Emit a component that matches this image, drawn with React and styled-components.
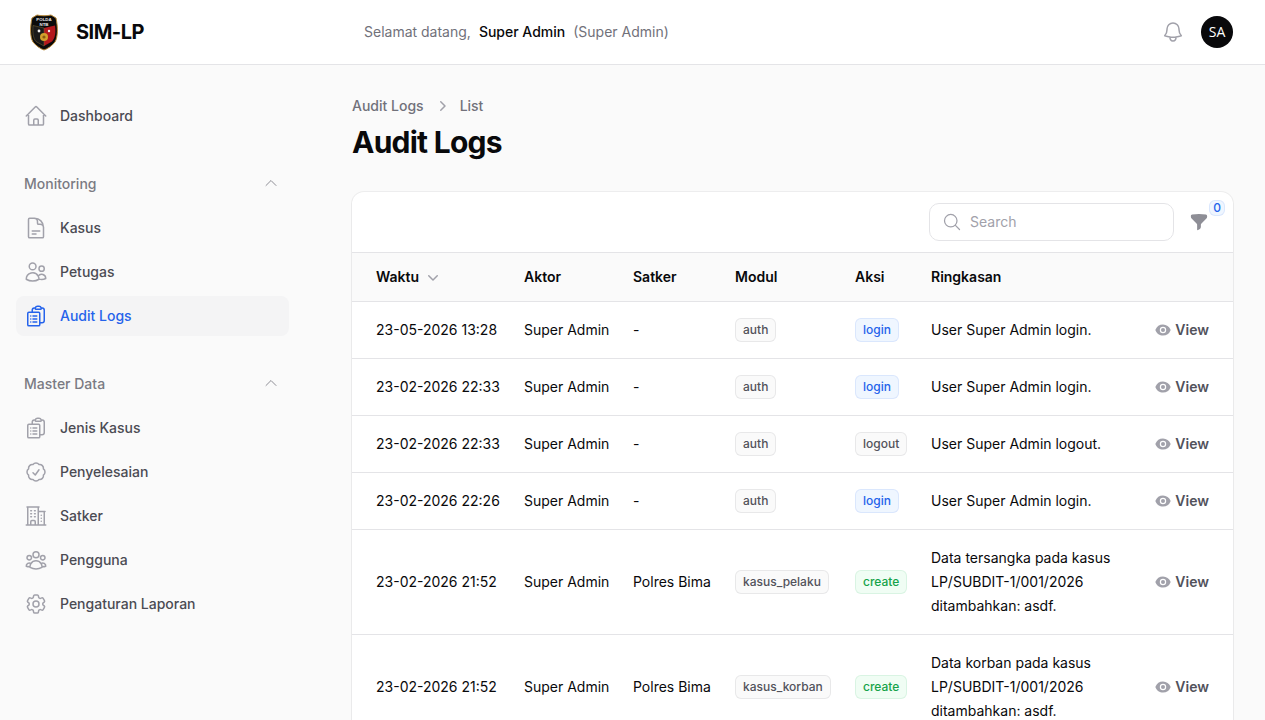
import React from "react"
import styled, { createGlobalStyle } from "styled-components"
import {
  HiOutlineHome,
  HiOutlineDocumentText,
  HiOutlineUsers,
  HiOutlineClipboardDocumentList,
  HiOutlineCheckBadge,
  HiOutlineBuildingOffice2,
  HiOutlineUserGroup,
  HiOutlineCog6Tooth,
  HiOutlineBell,
  HiOutlineMagnifyingGlass,
  HiOutlineChevronUp,
  HiFunnel,
  HiMiniEye,
  HiMiniChevronRight,
  HiMiniChevronDown,
} from "react-icons/hi2"

const GlobalStyle = createGlobalStyle`
  * {
    box-sizing: border-box;
  }
  html, body {
    margin: 0;
    height: 100%;
    overflow: hidden;
  }
  body {
    background: #fafafa;
    color: #09090b;
    font-family: Inter, "Liberation Sans", sans-serif;
    font-size: 14px;
    line-height: 20px;
  }
`

const monitoring = [
  { label: "Kasus", icon: HiOutlineDocumentText },
  { label: "Petugas", icon: HiOutlineUsers },
  { label: "Audit Logs", icon: HiOutlineClipboardDocumentList, active: true },
]

const masterData = [
  { label: "Jenis Kasus", icon: HiOutlineClipboardDocumentList },
  { label: "Penyelesaian", icon: HiOutlineCheckBadge },
  { label: "Satker", icon: HiOutlineBuildingOffice2 },
  { label: "Pengguna", icon: HiOutlineUserGroup },
  { label: "Pengaturan Laporan", icon: HiOutlineCog6Tooth },
]

const logs = [
  { time: "23-05-2026 13:28", satker: "-", modul: "auth", aksi: "login", text: "User Super Admin login." },
  { time: "23-02-2026 22:33", satker: "-", modul: "auth", aksi: "login", text: "User Super Admin login." },
  { time: "23-02-2026 22:33", satker: "-", modul: "auth", aksi: "logout", text: "User Super Admin logout." },
  { time: "23-02-2026 22:26", satker: "-", modul: "auth", aksi: "login", text: "User Super Admin login." },
  {
    time: "23-02-2026 21:52",
    satker: "Polres Bima",
    modul: "kasus_pelaku",
    aksi: "create",
    text: "Data tersangka pada kasus LP/SUBDIT-1/001/2026 ditambahkan: asdf.",
  },
  {
    time: "23-02-2026 21:52",
    satker: "Polres Bima",
    modul: "kasus_korban",
    aksi: "create",
    text: "Data korban pada kasus LP/SUBDIT-1/001/2026 ditambahkan: asdf.",
  },
]

const toneOf = { login: "blue", logout: "gray", create: "green" }

const Logo = () => (
  <LogoMark viewBox="0 0 30 38" aria-hidden="true">
    <path d="M3 5 L8 2 C12 3 18 3 22 2 L27 5 C29 14 29 24 26 29 C23 33 18 36 15 37 C12 36 7 33 4 29 C1 24 1 14 3 5Z" fill="#0b0b0b" stroke="#b98a3a" strokeWidth="1" />
    <path d="M15 15 L26 12.5 C27 20 26 25 23 28.5 L15 33Z" fill="#b3171c" />
    <path d="M15 15 L4 12.5 C3.5 20 4 25 7 28.5 L15 33Z" fill="#1a1a1a" stroke="#7b6a3a" strokeWidth=".5" />
    <circle cx="15" cy="24" r="4" fill="#d3a02c" />
    <circle cx="15" cy="24" r="1.6" fill="#8a5a12" />
    <circle cx="10" cy="18" r="1.4" fill="#f1f1f1" />
    <circle cx="20" cy="18" r="1.2" fill="#f1f1f1" />
    <LogoText x="15" y="8.2">POLDA</LogoText>
    <LogoText x="15" y="12.6">NTB</LogoText>
  </LogoMark>
)

const NavEntry = ({ item }) => {
  const Icon = item.icon
  return (
    <NavItem $active={item.active}>
      <Icon />
      <span>{item.label}</span>
    </NavItem>
  )
}

const NavGroup = ({ title, items }) => (
  <Group>
    <GroupLabel>
      <span>{title}</span>
      <HiOutlineChevronUp />
    </GroupLabel>
    {items.map((item) => (
      <NavEntry key={item.label} item={item} />
    ))}
  </Group>
)

const App = () => {
  return (
    <Page>
      <GlobalStyle />
      <Topbar>
        <Brand>
          <Logo />
          <BrandName>SIM-LP</BrandName>
        </Brand>
        <Welcome>
          Selamat datang,<WelcomeName>Super Admin</WelcomeName>(Super Admin)
        </Welcome>
        <TopActions>
          <BellButton>
            <HiOutlineBell />
          </BellButton>
          <Avatar>SA</Avatar>
        </TopActions>
      </Topbar>
      <Body>
        <Sidebar>
          <NavEntry item={{ label: "Dashboard", icon: HiOutlineHome }} />
          <NavGroup title="Monitoring" items={monitoring} />
          <NavGroup title="Master Data" items={masterData} />
        </Sidebar>
        <Main>
          <Breadcrumbs>
            <span>Audit Logs</span>
            <HiMiniChevronRight />
            <span>List</span>
          </Breadcrumbs>
          <Title>Audit Logs</Title>
          <Card>
            <Toolbar>
              <SearchBox>
                <HiOutlineMagnifyingGlass />
                <SearchInput placeholder="Search" />
              </SearchBox>
              <FilterButton>
                <HiFunnel />
                <FilterCount>0</FilterCount>
              </FilterButton>
            </Toolbar>
            <Table>
              <colgroup>
                <col style={{ width: 160 }} />
                <col style={{ width: 109 }} />
                <col style={{ width: 102 }} />
                <col style={{ width: 120 }} />
                <col style={{ width: 76 }} />
                <col style={{ width: 212 }} />
                <col />
              </colgroup>
              <thead>
                <tr>
                  <Th>
                    <SortLabel>
                      Waktu
                      <HiMiniChevronDown />
                    </SortLabel>
                  </Th>
                  <Th>Aktor</Th>
                  <Th>Satker</Th>
                  <Th>Modul</Th>
                  <Th>Aksi</Th>
                  <Th>Ringkasan</Th>
                  <Th />
                </tr>
              </thead>
              <tbody>
                {logs.map((log, i) => (
                  <tr key={i}>
                    <Td>{log.time}</Td>
                    <Td>Super Admin</Td>
                    <Td>{log.satker}</Td>
                    <Td>
                      <Badge $tone="gray">{log.modul}</Badge>
                    </Td>
                    <Td>
                      <Badge $tone={toneOf[log.aksi]}>{log.aksi}</Badge>
                    </Td>
                    <SummaryTd>{log.text}</SummaryTd>
                    <Td>
                      <ViewLink>
                        <HiMiniEye />
                        View
                      </ViewLink>
                    </Td>
                  </tr>
                ))}
              </tbody>
            </Table>
          </Card>
        </Main>
      </Body>
    </Page>
  )
}

export default App

const tones = {
  gray: { bg: "#fafafa", fg: "#52525b", ring: "rgba(82, 82, 91, 0.1)" },
  blue: { bg: "#eff6ff", fg: "#2563eb", ring: "rgba(37, 99, 235, 0.1)" },
  green: { bg: "#f0fdf4", fg: "#16a34a", ring: "rgba(22, 163, 74, 0.1)" },
}

const Page = styled.div`
  height: 100vh;
  display: flex;
  flex-direction: column;
  overflow: hidden;
`
const Topbar = styled.header`
  flex: none;
  height: 65px;
  display: flex;
  align-items: center;
  background: #fff;
  border-bottom: 1px solid #e4e4e7;
  padding: 0 32px 0 24px;
`
const Brand = styled.div`
  width: 340px;
  display: flex;
  align-items: center;
  gap: 17px;
  padding-left: 5px;
`
const LogoMark = styled.svg`
  width: 30px;
  height: 38px;
  flex: none;
`
const LogoText = styled.text`
  fill: #e8e8e8;
  font-family: "Liberation Sans", sans-serif;
  font-size: 4.4px;
  font-weight: 700;
  text-anchor: middle;
`
const BrandName = styled.div`
  font-size: 20px;
  line-height: 28px;
  font-weight: 700;
  letter-spacing: -0.5px;
`
const Welcome = styled.div`
  flex: 1;
  color: #71717a;
`
const WelcomeName = styled.span`
  color: #09090b;
  font-weight: 500;
  margin: 0 8px;
`
const TopActions = styled.div`
  display: flex;
  align-items: center;
  gap: 16px;
`
const BellButton = styled.div`
  width: 24px;
  height: 24px;
  color: #a1a1aa;
  svg {
    display: block;
    width: 24px;
    height: 24px;
  }
`
const Avatar = styled.div`
  width: 32px;
  height: 32px;
  border-radius: 50%;
  background: #09090b;
  color: #fff;
  display: flex;
  align-items: center;
  justify-content: center;
  font-family: "Open Sans", sans-serif;
  font-size: 14px;
`
const Body = styled.div`
  flex: 1;
  min-height: 0;
  display: flex;
`
const Sidebar = styled.aside`
  flex: none;
  width: 305px;
  padding: 31px 16px 0;
  display: flex;
  flex-direction: column;
  gap: 28px;
`
const Group = styled.div`
  display: flex;
  flex-direction: column;
  gap: 4px;
`
const GroupLabel = styled.div`
  height: 40px;
  padding: 0 8px;
  display: flex;
  align-items: center;
  justify-content: space-between;
  color: #7a7a83;
  font-weight: 500;
  svg {
    width: 20px;
    height: 20px;
    padding: 2px;
    color: #8e8e96;
    transform: translateY(-1px);
  }
`
const NavItem = styled.div`
  height: 40px;
  display: flex;
  align-items: center;
  gap: 12px;
  padding: 0 8px;
  border-radius: 8px;
  font-weight: 500;
  color: ${(p) => (p.$active ? "#2563eb" : "#4b4b53")};
  background: ${(p) => (p.$active ? "#f4f4f5" : "transparent")};
  svg {
    width: 24px;
    height: 24px;
    flex: none;
    color: ${(p) => (p.$active ? "#2563eb" : "#a1a1aa")};
  }
`
const Main = styled.main`
  flex: 1;
  min-width: 0;
  padding: 31px 32px 0 47px;
`
const Breadcrumbs = styled.div`
  display: flex;
  align-items: center;
  gap: 8px;
  color: #71717a;
  font-weight: 500;
  svg {
    width: 20px;
    height: 20px;
    color: #a1a1aa;
  }
`
const Title = styled.h1`
  margin: 8px 0 32px;
  font-size: 30px;
  line-height: 36px;
  font-weight: 700;
  letter-spacing: -0.75px;
`
const Card = styled.section`
  background: #fff;
  border-radius: 12px;
  box-shadow: 0 0 0 1px rgba(9, 9, 11, 0.05), 0 1px 2px rgba(0, 0, 0, 0.05);
  overflow: hidden;
`
const Toolbar = styled.div`
  height: 61px;
  display: flex;
  align-items: center;
  justify-content: flex-end;
  gap: 15px;
  padding: 0 24px;
  border-bottom: 1px solid #e4e4e7;
`
const SearchBox = styled.label`
  width: 245px;
  height: 38px;
  display: flex;
  align-items: center;
  gap: 8px;
  padding: 0 12px;
  border: 1px solid #e4e4e7;
  border-radius: 10px;
  background: #fff;
  svg {
    width: 20px;
    height: 20px;
    flex: none;
    color: #a1a1aa;
  }
`
const SearchInput = styled.input`
  flex: 1;
  min-width: 0;
  border: 0;
  outline: 0;
  padding: 0;
  background: transparent;
  font: inherit;
  color: #09090b;
  &::placeholder {
    color: #a1a1aa;
    opacity: 1;
  }
`
const FilterButton = styled.div`
  position: relative;
  width: 20px;
  height: 20px;
  svg {
    display: block;
    width: 20px;
    height: 20px;
    color: #8e8e96;
  }
`
const FilterCount = styled.span`
  position: absolute;
  top: -12px;
  left: 20px;
  min-width: 16px;
  height: 16px;
  border-radius: 6px;
  background: #eff6ff;
  box-shadow: inset 0 0 0 1px rgba(37, 99, 235, 0.1);
  color: #2563eb;
  font-size: 12px;
  line-height: 16px;
  font-weight: 500;
  text-align: center;
`
const Table = styled.table`
  width: 100%;
  border-collapse: separate;
  border-spacing: 0;
  table-layout: fixed;
  tr > *:first-child {
    padding-left: 24px;
  }
  tr > *:last-child {
    padding-right: 24px;
  }
`
const Th = styled.th`
  height: 49px;
  padding: 0 12px;
  background: #fafafa;
  border-bottom: 1px solid #e4e4e7;
  text-align: left;
  font-weight: 600;
`
const SortLabel = styled.span`
  display: inline-flex;
  align-items: center;
  gap: 4px;
  svg {
    width: 20px;
    height: 20px;
    color: #a1a1aa;
  }
`
const Td = styled.td`
  padding: 16px 12px;
  border-bottom: 1px solid #e4e4e7;
  line-height: 24px;
  white-space: nowrap;
`
const SummaryTd = styled(Td)`
  white-space: normal;
`
const Badge = styled.span`
  display: block;
  width: fit-content;
  height: 24px;
  padding: 4px 8px;
  border-radius: 6px;
  font-size: 12px;
  line-height: 16px;
  font-weight: 500;
  white-space: nowrap;
  background: ${(p) => tones[p.$tone].bg};
  color: ${(p) => tones[p.$tone].fg};
  box-shadow: inset 0 0 0 1px ${(p) => tones[p.$tone].ring};
`
const ViewLink = styled.span`
  display: flex;
  align-items: center;
  justify-content: flex-end;
  gap: 4px;
  color: #52525b;
  font-weight: 600;
  svg {
    width: 16px;
    height: 16px;
    color: #a1a1aa;
  }
`
